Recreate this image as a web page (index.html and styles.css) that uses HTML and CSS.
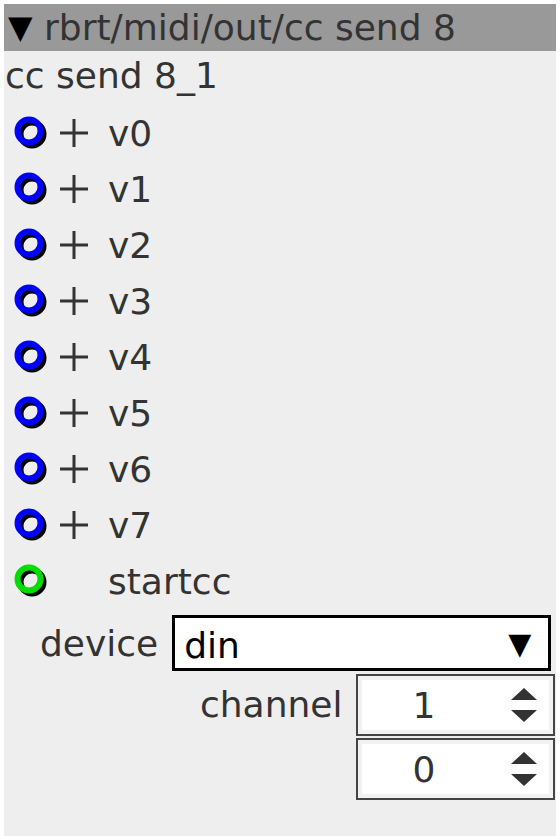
FILE: index.html
```html
<!DOCTYPE html>
<html lang="en">
<head>
    <meta charset="UTF-8">
    <title>cc send 8</title>
    <link rel="stylesheet" href="styles.css">
</head>
<body>
    <div class="panel">
        <div class="title-bar"><span class="caret">&#9660;</span> rbrt/midi/out/cc send 8</div>
        <div class="instance">cc send 8_1</div>

        <ul class="ports">
            <li class="port">
                <svg class="ring" width="38" height="38"><circle cx="20" cy="20" r="11.5" class="shadow"/><circle cx="17" cy="17" r="11.5" class="blue"/></svg>
                <svg class="plus" width="34" height="34"><path d="M17 3V31M3 17H31"/></svg>
                <span class="port-name">v0</span>
            </li>
            <li class="port">
                <svg class="ring" width="38" height="38"><circle cx="20" cy="20" r="11.5" class="shadow"/><circle cx="17" cy="17" r="11.5" class="blue"/></svg>
                <svg class="plus" width="34" height="34"><path d="M17 3V31M3 17H31"/></svg>
                <span class="port-name">v1</span>
            </li>
            <li class="port">
                <svg class="ring" width="38" height="38"><circle cx="20" cy="20" r="11.5" class="shadow"/><circle cx="17" cy="17" r="11.5" class="blue"/></svg>
                <svg class="plus" width="34" height="34"><path d="M17 3V31M3 17H31"/></svg>
                <span class="port-name">v2</span>
            </li>
            <li class="port">
                <svg class="ring" width="38" height="38"><circle cx="20" cy="20" r="11.5" class="shadow"/><circle cx="17" cy="17" r="11.5" class="blue"/></svg>
                <svg class="plus" width="34" height="34"><path d="M17 3V31M3 17H31"/></svg>
                <span class="port-name">v3</span>
            </li>
            <li class="port">
                <svg class="ring" width="38" height="38"><circle cx="20" cy="20" r="11.5" class="shadow"/><circle cx="17" cy="17" r="11.5" class="blue"/></svg>
                <svg class="plus" width="34" height="34"><path d="M17 3V31M3 17H31"/></svg>
                <span class="port-name">v4</span>
            </li>
            <li class="port">
                <svg class="ring" width="38" height="38"><circle cx="20" cy="20" r="11.5" class="shadow"/><circle cx="17" cy="17" r="11.5" class="blue"/></svg>
                <svg class="plus" width="34" height="34"><path d="M17 3V31M3 17H31"/></svg>
                <span class="port-name">v5</span>
            </li>
            <li class="port">
                <svg class="ring" width="38" height="38"><circle cx="20" cy="20" r="11.5" class="shadow"/><circle cx="17" cy="17" r="11.5" class="blue"/></svg>
                <svg class="plus" width="34" height="34"><path d="M17 3V31M3 17H31"/></svg>
                <span class="port-name">v6</span>
            </li>
            <li class="port">
                <svg class="ring" width="38" height="38"><circle cx="20" cy="20" r="11.5" class="shadow"/><circle cx="17" cy="17" r="11.5" class="blue"/></svg>
                <svg class="plus" width="34" height="34"><path d="M17 3V31M3 17H31"/></svg>
                <span class="port-name">v7</span>
            </li>
            <li class="port">
                <svg class="ring" width="38" height="38"><circle cx="20" cy="20" r="11.5" class="shadow"/><circle cx="17" cy="17" r="11.5" class="green"/></svg>
                <span class="plus"></span>
                <span class="port-name">startcc</span>
            </li>
        </ul>

        <div class="field device-field">
            <label class="field-label">device</label>
            <div class="select">
                <span class="select-value">din</span>
                <span class="select-arrow">&#9660;</span>
            </div>
        </div>

        <div class="field channel-field">
            <label class="field-label">channel</label>
            <div class="spins">
                <div class="spin">
                    <span class="spin-value">1</span>
                    <svg class="spin-arrows" width="26" height="38"><path d="M13 2L26 14H0Z"/><path d="M0 24H26L13 36Z"/></svg>
                </div>
                <div class="spin">
                    <span class="spin-value">0</span>
                    <svg class="spin-arrows" width="26" height="38"><path d="M13 2L26 14H0Z"/><path d="M0 24H26L13 36Z"/></svg>
                </div>
            </div>
        </div>
    </div>
</body>
</html>
```

FILE: styles.css
```css
body {
    margin: 4px;
    background-color: #ffffff;
    font-family: "DejaVu Sans", sans-serif;
    color: #333333;
}
.panel {
    height: 832px;
    background-color: #eeeeee;
}
.title-bar {
    height: 47px;
    line-height: 47px;
    background-color: #999999;
    font-size: 36px;
    padding-left: 4px;
    white-space: nowrap;
}
.caret {
    color: #000000;
    font-size: 32px;
    vertical-align: 2px;
}
.instance {
    height: 54px;
    line-height: 50px;
    font-size: 36px;
    padding-left: 1px;
}
.ports {
    list-style: none;
    margin: 0;
    padding: 0;
}
.port {
    display: flex;
    align-items: center;
    height: 56px;
}
.ring {
    margin-left: 8px;
    margin-right: 7px;
}
.ring circle {
    fill: none;
    stroke-width: 6;
}
.ring .shadow { stroke: #000000; }
.ring .blue { stroke: #0000ff; }
.ring .green { stroke: #00dd00; }
.plus {
    width: 34px;
    height: 34px;
    margin-right: 17px;
}
.plus path {
    stroke: #333333;
    stroke-width: 3;
}
.port-name {
    font-size: 36px;
}
.field {
    display: flex;
}
.field-label {
    font-size: 36px;
}
.device-field {
    margin-top: 6px;
    align-items: center;
}
.device-field .field-label {
    margin-left: 36px;
    margin-right: 14px;
}
.select {
    box-sizing: border-box;
    width: 379px;
    height: 56px;
    border: 3px solid #000000;
    background-color: #ffffff;
    display: flex;
    align-items: flex-end;
    justify-content: space-between;
    padding: 0 17px 0 9px;
    color: #000000;
}
.select-value {
    font-size: 36px;
    line-height: 44px;
}
.select-arrow {
    font-size: 30px;
    align-self: center;
}
.channel-field {
    margin-top: 3px;
}
.channel-field .field-label {
    margin-left: 196px;
    margin-right: 14px;
    line-height: 62px;
}
.spins {
    display: flex;
    flex-direction: column;
    gap: 2px;
}
.spin {
    box-sizing: border-box;
    width: 199px;
    height: 62px;
    border: 2px solid #444444;
    background-color: #ffffff;
    box-shadow: inset 0 0 0 4px #f2f2f2;
    display: flex;
    align-items: center;
    padding-right: 16px;
}
.spin-value {
    flex: 1;
    text-align: center;
    font-size: 36px;
    padding-right: 22px;
}
.spin-arrows path {
    fill: #333333;
}
```
